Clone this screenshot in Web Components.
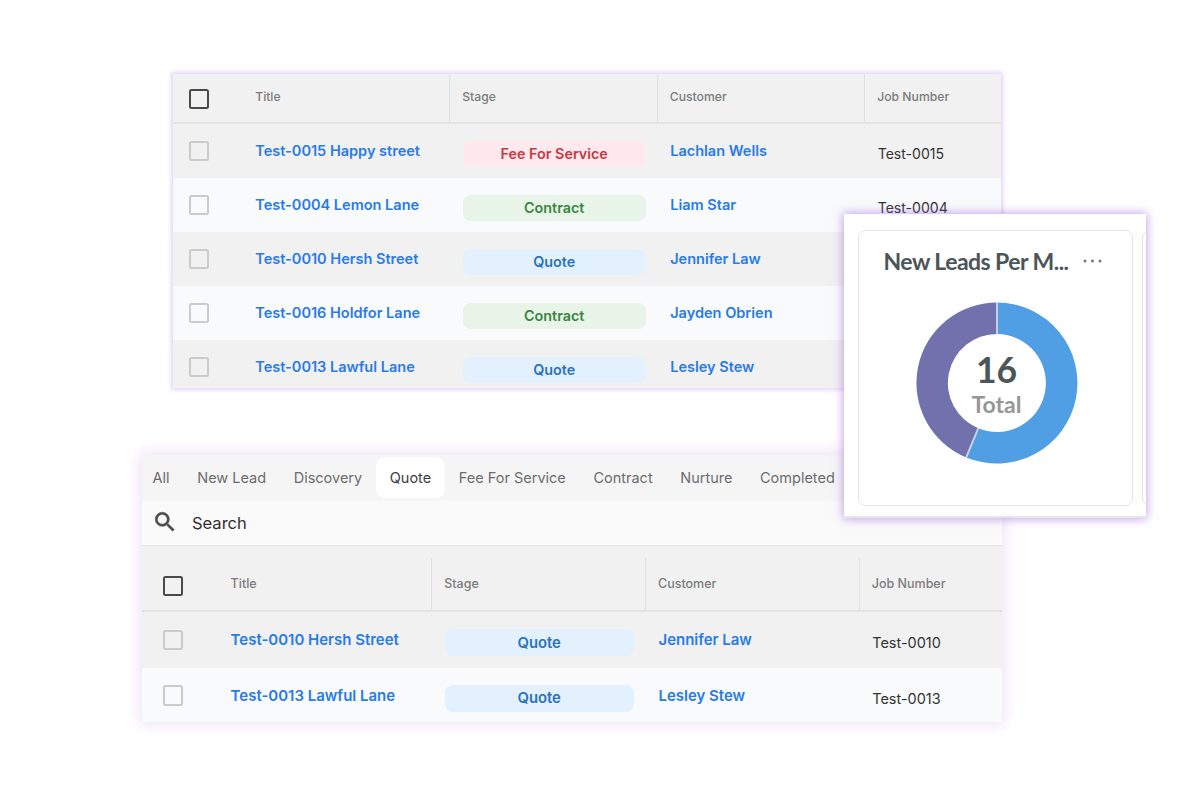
<!DOCTYPE html>
<html lang="en">
<head>
<meta charset="utf-8">
<title>Leads</title>
<style>
html, body { margin: 0; height: 100%; background: #fff; }
body { font-family: Inter, "Liberation Sans", sans-serif; overflow: hidden; }
</style>
</head>
<body>
<leads-board></leads-board>
<script>
const define = (name, html) => {
  const template = document.createElement('template');
  template.innerHTML = html;
  customElements.define(name, class extends HTMLElement {
    constructor() {
      super();
      this.attachShadow({ mode: 'open' }).append(template.content.cloneNode(true));
    }
  });
};

define('check-box', `<style>
  :host { display: block; box-sizing: border-box; width: var(--box); height: var(--box); border: 2px solid #cbcbcb; border-radius: 2.5px; }
  :host([head]) { border-color: #4a4a4c; }
</style>`);

define('stage-pill', `<style>
  :host { display: flex; align-items: center; justify-content: center; box-sizing: border-box; width: var(--pill-w); height: var(--pill-h);
    border-radius: 8px; font-weight: 600; font-size: var(--pill); background: #e2f1fd; color: #2a73bd; }
  :host([kind="fee"]) { background: #ffe9ec; color: #c53a45; }
  :host([kind="contract"]) { background: #e7f4e7; color: #3b8542; }
</style><slot></slot>`);

define('head-cell', `<style>
  :host { display: flex; align-items: center; box-sizing: border-box; padding: 0 0 var(--head-lift) var(--pad); color: #7c7c7c;
    font-weight: 500; font-size: var(--head); border-left: 1.5px solid #e0e0e1; white-space: nowrap; }
  :host([plain]) { border-left: 0; padding-left: 0; }
</style><slot></slot>`);

define('table-head', `<style>
  :host { display: block; height: var(--head-h); box-sizing: border-box; border-bottom: 2px solid #e3e3e4; padding-top: var(--head-gap); background: #f1f1f1; }
  .grid { display: grid; grid-template-columns: var(--cols); height: 100%; }
  .check { padding: var(--head-check-top) 0 0 var(--check-x); }
</style><div class="grid"><div class="check"><check-box head></check-box></div>
<head-cell plain>Title</head-cell><head-cell>Stage</head-cell><head-cell>Customer</head-cell><head-cell>Job Number</head-cell></div>`);

define('lead-row', `<style>
  :host { display: grid; grid-template-columns: var(--cols); height: var(--row-h); align-items: center; background: #f1f1f1; font-size: var(--link); white-space: nowrap; box-sizing: border-box; padding-bottom: var(--row-lift); }
  :host(:nth-of-type(even)) { background: #f8fafc; }
  check-box { margin-left: var(--check-x); }
  .link { font-weight: 600; color: #297be8; }
  .in { padding-left: calc(var(--pad) + 1.5px); }
  .job { color: #333; font-size: var(--job); }
  .low { padding-top: 6px; }
</style><check-box></check-box><span class="link"><slot name="title"></slot></span>
<div class="in low"><slot name="stage"></slot></div>
<span class="link in"><slot name="customer"></slot></span><span class="job in low"><slot name="job"></slot></span>`);

define('glow-panel', `<style>
  :host { display: block; box-sizing: border-box; }
  .clip { overflow: hidden; height: 100%; }
</style><div class="clip"><slot></slot></div>`);

define('tab-item', `<style>
  :host { display: flex; align-items: center; height: 41px; padding: 0 13.8px; box-sizing: border-box; font-size: 14.5px; color: #6c6c6e; border-radius: 9px; white-space: nowrap; }
  :host(:first-child) { padding-left: 10.6px; }
  :host([active]) { background: #fff; color: #3c3c3e; }
</style><slot></slot>`);

define('tab-bar', `<style>
  :host { display: flex; height: 46px; box-sizing: border-box; padding-top: 2px; background: #f5f5f5; }
</style><slot></slot>`);

define('search-bar', `<style>
  :host { display: flex; align-items: center; height: 45px; box-sizing: border-box; background: #fafafa; border-bottom: 1px solid #e4e4e5; padding-left: 9.5px; font-size: 16.5px; color: #303032; }
  svg { width: 26px; height: 26px; margin: -3px 14.5px 0 0; fill: #4c4c4e; stroke: #4c4c4e; stroke-width: .5; }
</style><svg viewBox="0 0 24 24"><path d="M15.5 14h-.79l-.28-.27A6.47 6.47 0 0 0 16 9.5 6.5 6.5 0 1 0 9.5 16c1.61 0 3.09-.59 4.23-1.57l.27.28v.79l5 4.99L20.49 19zm-6 0C7.01 14 5 11.99 5 9.5S7.01 5 9.5 5 14 7.01 14 9.5 11.99 14 9.5 14"/></svg><span>Search</span>`);

define('donut-chart', `<style>
  :host { display: grid; width: 162px; height: 162px; place-items: center; }
  svg, .label { grid-area: 1 / 1; }
  .label { display: flex; flex-direction: column; align-items: center; color: #4c5558; }
  b { font-size: 35.5px; line-height: 36px; margin-top: 3px; height: 38px; }
  span { font-size: 23px; line-height: 28px; font-weight: 700; color: #949698; }
</style><svg width="162" height="162" viewBox="-81 -81 162 162">
<path fill="#509ee3" d="M0-80.5A80.5 80.5 0 1 1-30.8 74.4L-18.8 45.3A49 49 0 1 0 0-49Z"/>
<path fill="#7172ad" d="M-30.8 74.4A80.5 80.5 0 0 1 0-80.5V-49A49 49 0 0 0-18.8 45.3Z"/>
<path stroke="#d3d6ee" stroke-width="1.8" d="M0-81V-48.5M-31 74.8L-18.6 44.9"/>
</svg><div class="label"><b>16</b><span>Total</span></div>`);

define('metric-card', `<style>
  :host { display: block; position: absolute; left: 844px; top: 214px; width: 301.5px; height: 304px; box-sizing: border-box; background: #fff;
    box-shadow: 0 0 9px 1px rgba(150, 90, 215, .55); font-family: Lato, sans-serif; }
  .clip { display: grid; grid-template-columns: 275px 20px; column-gap: 9px; overflow: hidden; height: 100%; box-sizing: border-box; padding: 16px 0 10px 14px; border-bottom: 2px solid #e6e6ea; }
  .box { border: 1.5px solid #e2e6e7; border-radius: 8px; box-sizing: border-box; height: 276px; display: flex; flex-direction: column; align-items: center; }
  header { align-self: stretch; display: flex; align-items: center; height: 30px; margin: 15px 0 0 24.5px; }
  h2 { margin: 0; font-size: 23px; font-weight: 700; color: #4c5558; white-space: nowrap; letter-spacing: -.55px; width: 199.5px; }
  svg { display: block; margin-top: -1px; }
  donut-chart { margin-top: 26px; margin-left: 2px; }
</style><div class="clip"><div class="box"><header><h2>New Leads Per M...</h2>
<svg width="20" height="4" viewBox="0 0 20 4" fill="#75797c"><circle cx="2" cy="2" r="1.5"/><circle cx="9.5" cy="2" r="1.5"/><circle cx="17" cy="2" r="1.5"/></svg></header>
<donut-chart></donut-chart></div><div class="box"></div></div>`);

const row = (title, kind, stage, customer, job) =>
  `<lead-row><span slot="title">${title}</span><stage-pill slot="stage" kind="${kind}">${stage}</stage-pill><span slot="customer">${customer}</span><span slot="job">${job}</span></lead-row>`;

define('leads-board', `<style>
  :host { display: block; position: relative; width: 1200px; height: 800px; box-sizing: border-box; padding-top: 74px; }
  .all { margin-left: 172.5px; width: 828.5px; height: 314px; box-shadow: 0 0 4px 2px #e3d6fc;
    --cols: 82.7px 194px 207.5px 207.5px 1fr; --box: 20px; --check-x: 16.5px; --head-check-top: 14.5px; --pad: 12px;
    --head: 12.2px; --head-h: 50px; --head-gap: 0px; --head-lift: 3px; --row-h: 54px; --row-lift: 1px; --link: 14.52px; --pill: 14.35px; --job: 14.05px; --pill-w: 183px; --pill-h: 26px; }
  .quotes { margin: 67px 0 0 142px; width: 859.5px; height: 267px; box-shadow: 0 0 14px 3px #f0e3fa;
    --cols: 88.6px 200.4px 213.8px 213.8px 1fr; --box: 20.5px; --check-x: 20.5px; --head-check-top: 17.5px; --pad: 12.2px;
    --head: 12.5px; --head-h: 66px; --head-gap: 12px; --head-lift: 1px; --row-h: 55.5px; --row-lift: 0px; --link: 14.98px; --pill: 14.8px; --job: 14.45px; --pill-w: 189px; --pill-h: 27px; }
</style>
<glow-panel class="all"><table-head></table-head>
${row('Test-0015 Happy street', 'fee', 'Fee For Service', 'Lachlan Wells', 'Test-0015')}
${row('Test-0004 Lemon Lane', 'contract', 'Contract', 'Liam Star', 'Test-0004')}
${row('Test-0010 Hersh Street', 'quote', 'Quote', 'Jennifer Law', '')}
${row('Test-0016 Holdfor Lane', 'contract', 'Contract', 'Jayden Obrien', '')}
${row('Test-0013 Lawful Lane', 'quote', 'Quote', 'Lesley Stew', '')}
</glow-panel>
<glow-panel class="quotes">
<tab-bar><tab-item>All</tab-item><tab-item>New Lead</tab-item><tab-item>Discovery</tab-item><tab-item active>Quote</tab-item><tab-item>Fee For Service</tab-item><tab-item>Contract</tab-item><tab-item>Nurture</tab-item><tab-item>Completed</tab-item></tab-bar>
<search-bar></search-bar><table-head></table-head>
${row('Test-0010 Hersh Street', 'quote', 'Quote', 'Jennifer Law', 'Test-0010')}
${row('Test-0013 Lawful Lane', 'quote', 'Quote', 'Lesley Stew', 'Test-0013')}
</glow-panel>
<metric-card></metric-card>`);
</script>
</body>
</html>
